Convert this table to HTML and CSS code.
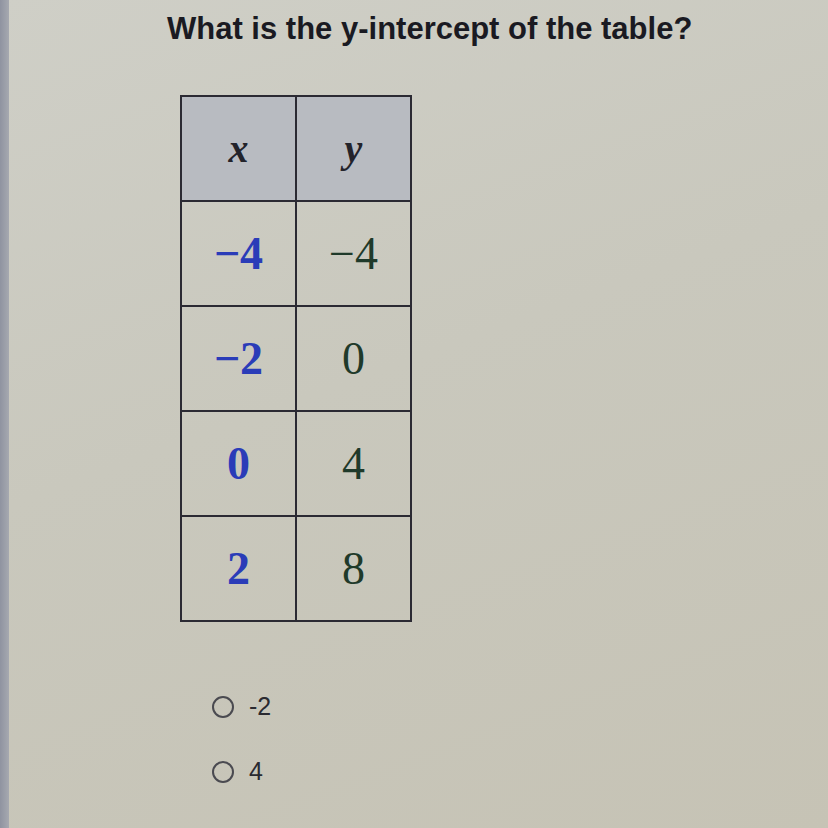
FILE: index.html
```html
<!DOCTYPE html>
<html>
<head>
<meta charset="utf-8">
<link rel="stylesheet" href="styles.css">
</head>
<body>
<div class="page">
  <div class="edge"></div>
  <div class="content">
    <h1 class="question">What is the y-intercept of the table?</h1>
    <table class="data">
      <tr class="head">
        <th><span class="var">x</span></th>
        <th><span class="var">y</span></th>
      </tr>
      <tr><td class="xv">&minus;4</td><td class="yv">&minus;4</td></tr>
      <tr><td class="xv">&minus;2</td><td class="yv">0</td></tr>
      <tr><td class="xv">0</td><td class="yv">4</td></tr>
      <tr><td class="xv">2</td><td class="yv">8</td></tr>
    </table>
    <div class="choices">
      <label class="choice"><span class="radio"></span><span class="ctext">-2</span></label>
      <label class="choice"><span class="radio"></span><span class="ctext">4</span></label>
    </div>
  </div>
</div>
</body>
</html>
```
FILE: styles.css
```css
html, body {
  margin: 0;
  padding: 0;
  background: #c8c7bc;
}
.page {
  display: flex;
  width: 828px;
  height: 828px;
  overflow: hidden;
  background: linear-gradient(160deg, #cfcfc7 0%, #c9c8bd 45%, #c6c3b5 100%);
}
.edge {
  width: 9px;
  flex: none;
  background: linear-gradient(90deg, #8f93a0, #a6a9b0);
}
.content {
  padding-left: 158px;
  display: flex;
  flex-direction: column;
  align-items: flex-start;
}
.question {
  margin: 11px 0 0 0;
  font-family: "Liberation Sans", Arial, sans-serif;
  font-weight: bold;
  font-size: 31px;
  line-height: 36px;
  color: #1a1a22;
  letter-spacing: 0;
}
.data {
  margin-top: 48px;
  margin-left: 13px;
  border-collapse: collapse;
}
.data th, .data td {
  width: 113px;
  height: 103px;
  border: 2px solid #2b2a33;
  text-align: center;
  vertical-align: middle;
  padding: 0;
  font-family: "Liberation Serif", "Times New Roman", serif;
}
.data th {
  background: #b8bbc1;
}
.var {
  font-style: italic;
  font-weight: bold;
  font-size: 40px;
  color: #23232b;
}
.xv {
  font-size: 46px;
  font-weight: bold;
  color: #2a3cb8;
}
.yv {
  font-size: 46px;
  color: #1f3a2a;
}
.choices {
  margin-top: 70px;
  margin-left: 45px;
  display: flex;
  flex-direction: column;
  gap: 36px;
}
.choice {
  display: flex;
  align-items: center;
  gap: 15px;
}
.radio {
  width: 18px;
  height: 18px;
  border: 2px solid #4a4a50;
  border-radius: 50%;
}
.ctext {
  font-family: "Liberation Sans", Arial, sans-serif;
  font-size: 25px;
  color: #2a2a30;
}
```
